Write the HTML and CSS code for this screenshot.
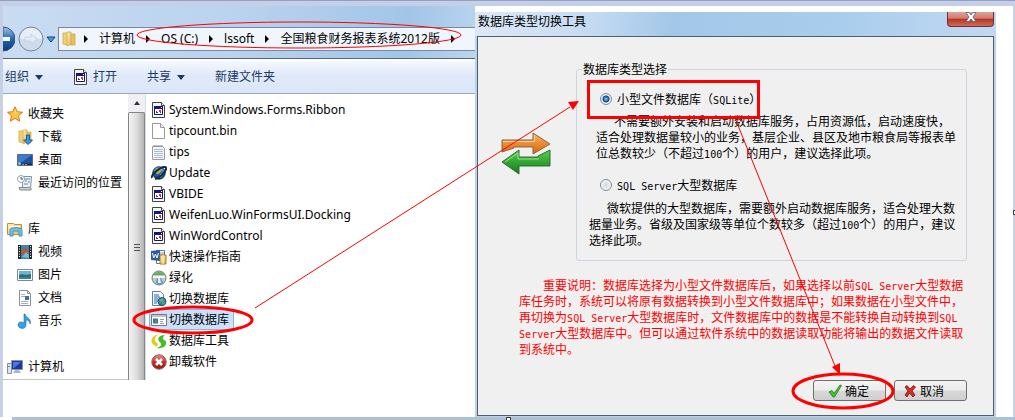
FILE: index.html
```html
<!DOCTYPE html>
<html lang="zh-CN">
<head>
<meta charset="utf-8">
<title>数据库类型切换工具</title>
<link rel="stylesheet" href="styles.css">
</head>
<body>
<svg class="defs" aria-hidden="true">
  <linearGradient id="gBlue" x2="0" y2="1"><stop stop-color="#9cc6ea"/><stop offset=".5" stop-color="#2467ae"/><stop offset="1" stop-color="#0a3a80"/></linearGradient>
  <linearGradient id="gFolder" x2="1" y2="1"><stop stop-color="#fdf3bf"/><stop offset="1" stop-color="#e5b84e"/></linearGradient>
  <linearGradient id="gOrange" x2="0" y2="1"><stop stop-color="#ffb45c"/><stop offset="1" stop-color="#d4660c"/></linearGradient>
  <linearGradient id="gGreen" x2="0" y2="1"><stop stop-color="#56d04a"/><stop offset="1" stop-color="#127a1c"/></linearGradient>
  <linearGradient id="gRed" x2="0" y2="1"><stop stop-color="#f0908a"/><stop offset=".5" stop-color="#cc2a24"/><stop offset="1" stop-color="#a01410"/></linearGradient>
  <symbol id="dll" viewBox="0 0 16 16"><path d="M1.500 .5h9l3 3v12h-12z" fill="#f6f6f0" stroke="#444"/><path d="M10.500 .5v3h3" fill="#fff" stroke="#444"/><path d="M3 5h9v8H3z" fill="#fff"/><path d="M3 4h9v3H3z" fill="#101890"/><path d="M3.500 4.500h8v8h-8z" fill="none" stroke="#14185c"/><path d="M10 5h1v1h-1z" fill="#fff"/><path d="M5 9h1v1H5z" fill="#d02020"/><path d="M8 8h2v2H8z" fill="#e03020"/><path d="M5 10h2v1H5zM9 10h1v1H9z" fill="#2040c0"/></symbol>
  <symbol id="page" viewBox="0 0 16 16"><path d="M1.500 .5h8l4 4v11h-12z" fill="#fefefa" stroke="#999"/><path d="M9.500 .5v4h4" fill="#eee" stroke="#999"/></symbol>
  <symbol id="note" viewBox="0 0 16 16"><path d="M1.500 2.500h10l2 2v11h-12z" fill="#f5f8fa" stroke="#99a"/><path d="M3 5.500h9M3 7.500h9M3 9.500h9M3 11.500h9M3 13.500h9" stroke="#abc" /><path d="M3 1v2M5 1v2M7 1v2M9 1v2M11 1v2" stroke="#888"/></symbol>
  <symbol id="globe" viewBox="0 0 16 16"><circle cx="8" cy="8" r="6.200" fill="url(#gBlue)" stroke="#0c2345"/><path d="M4 5l4-2 2 2-1 3-3 1zM9 9l3-1-1 4-2 1z" fill="#82b456"/><path d="M1 13C-.5 10 10 1 14 2s-3 10-10 12" fill="none" stroke="#172a3d" stroke-width="2"/><path d="M6 9l4-4" stroke="#d9a53c" stroke-width="1.500"/></symbol>
  <symbol id="word" viewBox="0 0 16 16"><path d="M5.500 1.500h8v13h-8z" fill="#fff" stroke="#678"/><path d="M7 4h6M7 6h6M7 8h6" stroke="#7895c0"/><path d="M0 2l9-1v11l-9-1z" fill="#285aa8"/><path d="M1.500 4l1.200 5L4.500 5l1.500 4L7.500 4" fill="none" stroke="#fff"/><path d="M9 6h6v9H9z" fill="url(#gFolder)" stroke="#a9741a"/><path d="M12 6v9" stroke="#fff" stroke-dasharray="1 1"/></symbol>
  <symbol id="green" viewBox="0 0 16 16"><circle cx="8" cy="8" r="7" fill="#b7cbc7" stroke="#71837f"/><path d="M2 5c2-4 10-4 12 0z" fill="#69a95a"/><path d="M2 6h12v2H2z" fill="#f4f4f4"/><path d="M6 8h4l2 5-4 2-3-2z" fill="#5f98c5"/><path d="M7 8h2l1 5H7z" fill="#eef"/></symbol>
  <symbol id="dbdoc" viewBox="0 0 16 16"><path d="M1.500 .5h8l3 3v11h-11z" fill="#f6faff" stroke="#5b7daa"/><path d="M3 4h5M3 6h6M3 8h4M3 10h4M3 12h3" stroke="#2f62ac"/><circle cx="11" cy="10.500" r="4" fill="#3e7fc0" stroke="#254d78"/><path d="M8 9l4-2 1 3-3 1zM11 12l3-1-1 3z" fill="#64b847"/></symbol>
  <symbol id="app" viewBox="0 0 16 16"><path d="M.5 2.500h15v11H.5z" fill="#fff" stroke="#777"/><path d="M1 3h14v2H1z" fill="#bcc5cf"/><path d="M2 6.500h5v5H2z" fill="#387795"/><path d="M3 9l3-2v4z" fill="#4f9a5b"/><path d="M9 7.500h4M9 9.500h3M9 11.500h4" stroke="#999"/></symbol>
  <symbol id="swirl" viewBox="0 0 16 16"><path d="M8 1C3 2-1 6 1 10c1 2 3 2 4 4l2-2c0-3-4-3-3-6 0-2 2-4 4-5z" fill="#e9cb17"/><path d="M14 2C9 2 6 5 8 8c1 2 3 2 2 4 0 1-2 2-4 3 5 1 10-2 9-6-1-3-4-2-3-4 0-1 1-2 2-3z" fill="#45bc25"/></symbol>
  <symbol id="remove" viewBox="0 0 16 16"><circle cx="8" cy="8" r="7.200" fill="url(#gRed)" stroke="#78605e"/><path d="M5 5l6 6M11 5l-6 6" stroke="#fff" stroke-width="2.600"/></symbol>
  <symbol id="star" viewBox="0 0 16 16"><path d="M8 .8l2.200 4.900 5.300.6-4 3.500 1.200 5.300L8 12.400l-4.700 2.700 1.200-5.300-4-3.500 5.300-.6z" fill="#ffc547" stroke="#d8731c"/><path d="M8 3l1.400 3.800L13 7H8z" fill="#ffe79a"/></symbol>
  <symbol id="folder" viewBox="0 0 16 16"><path d="M2 2h5v12l-5-1z" fill="#f0d272" stroke="#cda94c" stroke-width=".8"/><path d="M9 3h5v11H9z" fill="#e6c05a" stroke="#cda94c" stroke-width=".8"/><path d="M6 1h4v12l-4 2z" fill="url(#gFolder)" stroke="#cda94c" stroke-width=".8"/></symbol>
  <symbol id="download" viewBox="0 0 16 16"><use href="#folder"/><path d="M9.500 6h3v5h3L11 15.500 6.500 11h3z" fill="#3b9be0" stroke="#175a9c"/></symbol>
  <symbol id="desktop" viewBox="0 0 16 16"><path d="M.5 2.500h15v11H.5z" fill="#1c52a4" stroke="#667"/><path d="M1 3h14L5 10H1z" fill="#3c7ccc"/><path d="M1 11.500h14V13H1z" fill="#1b2a50"/><circle cx="2.500" cy="11.500" r="1.500" fill="#6ed5ec"/><path d="M5 12.500h2M8 12.500h2" stroke="#e8843c"/></symbol>
  <symbol id="recent" viewBox="0 0 16 16"><path d="M5.500 1.500h9l-1 12h-8z" fill="#eef2f6" stroke="#8292a1"/><circle cx="4" cy="4" r="3.500" fill="#fff" stroke="#8da0b0"/><path d="M4 2v2h2" fill="none" stroke="#345"/><path d="M8 4h5M8 6h2M11 7h2M7 9h4" stroke="#488bc8"/><path d="M2 12.500h9c1-1 4 0 3 2.500H3z" fill="#cbd1d6" stroke="#7e8992"/></symbol>
  <symbol id="library" viewBox="0 0 16 16"><path d="M.5 2.500h6l1 1h7v10H.5z" fill="url(#gFolder)" stroke="#b99137"/><path d="M2 5.500h11" stroke="#fff"/><path d="M3 15V9c0-3 12-3 12 0v6h-3v-5H6v5z" fill="#77c4e8" stroke="#3d8fbb"/></symbol>
  <symbol id="video" viewBox="0 0 16 16"><path d="M1 1h14v14H1z" fill="#222c30"/><path d="M4 1h8v14H4z" fill="#3d87ad"/><path d="M4 7l4-4 4 5v3H4z" fill="#a65e3e"/><path d="M5 13l4-5 3 3v3z" fill="#6abbe0"/><path d="M2.500 2v12M13.500 2v12" stroke="#eee" stroke-dasharray="1 1.500"/></symbol>
  <symbol id="picture" viewBox="0 0 16 16"><path d="M.5 2.500h15v11H.5z" fill="#fff" stroke="#7b8791"/><path d="M2 4h12v8H2z" fill="#66b5e8"/><path d="M2 8c4-2 5 1 12-1v3H2z" fill="#356f50"/><path d="M2 10h12v2H2z" fill="#2d80bb"/></symbol>
  <symbol id="document" viewBox="0 0 16 16"><path d="M2.500 .5h8l3 3v12h-11z" fill="#fff" stroke="#8793a0"/><path d="M10.500 .5v3h3" fill="none" stroke="#8793a0"/><path d="M4 4.500h4M4 6.500h4M4 11.500h7M4 13.500h7" stroke="#a4afba"/><path d="M8 6h4v4H8z" fill="#426dba"/></symbol>
  <symbol id="music" viewBox="0 0 16 16"><path d="M8 1c1 4 7 4 5 10 0-3-2-4-4-4v5c0 5-8 4-8 0 0-3 3-4 6-2V1z" fill="#36a0e0" stroke="#1768a8" stroke-width=".6"/></symbol>
  <symbol id="computer" viewBox="0 0 16 16"><path d="M.5 4.500h4v10h-4z" fill="#dce3e8" stroke="#84909a"/><path d="M1 7.500h2" stroke="#4a7"/><path d="M4.500 1.500h11v9h-11z" fill="#1838a8" stroke="#8996a4"/><path d="M6 3h8l-7 6H6z" fill="#4a78d8"/><path d="M8 11h4l2 3H6z" fill="#aeb8c2"/></symbol>
  <symbol id="tri" viewBox="0 0 8 8"><path d="M2 0l4 4-4 4z" fill="#000"/></symbol>
  <symbol id="down" viewBox="0 0 8 5"><path d="M0 0h8L4 5z" fill="#1c3a66"/></symbol>
</svg>

<div class="screen">
  <div class="stage">
    <section class="explorer">
      <header class="nav">
        <button class="back" aria-label="后退"><svg viewBox="0 0 12 26"><path d="M0 1a12 12 0 010 24z" fill="url(#gBlue)" stroke="#3a5170"/><path d="M0 11h7v4H0z" fill="#fff"/></svg></button>
        <button class="forward" aria-label="前进"><svg viewBox="0 0 26 26"><circle cx="13" cy="13" r="12" fill="#cfdbeb" stroke="#76859c"/><path d="M2 13a11 11 0 0122 0z" fill="#e6eef8"/><path d="M7 11h6V8l6 5-6 5v-3H7z" fill="#e3ebf5" stroke="#c6d2e4"/></svg></button>
        <button class="recent" aria-label="最近浏览"><svg viewBox="0 0 10 7"><path d="M1 1h8L5 6z" fill="#3e9bdc" stroke="#183f78"/></svg></button>
        <nav class="address">
          <svg class="icon"><use href="#folder"/></svg>
          <svg class="sep"><use href="#tri"/></svg><a href="#">计算机</a>
          <svg class="sep"><use href="#tri"/></svg><a href="#">OS (C:)</a>
          <svg class="sep"><use href="#tri"/></svg><a href="#">lssoft</a>
          <svg class="sep"><use href="#tri"/></svg><a href="#">全国粮食财务报表系统2012版</a>
          <svg class="sep"><use href="#tri"/></svg>
        </nav>
      </header>
      <div class="toolbar">
        <button>组织<svg class="caret"><use href="#down"/></svg></button>
        <button><svg class="icon"><use href="#dll"/></svg>打开</button>
        <button>共享<svg class="caret"><use href="#down"/></svg></button>
        <button>新建文件夹</button>
      </div>
      <div class="content">
        <nav class="tree">
          <a class="root" href="#"><svg class="icon"><use href="#star"/></svg>收藏夹</a>
          <a href="#"><svg class="icon"><use href="#download"/></svg>下载</a>
          <a href="#"><svg class="icon"><use href="#desktop"/></svg>桌面</a>
          <a href="#"><svg class="icon"><use href="#recent"/></svg>最近访问的位置</a>
          <a class="root" href="#"><svg class="icon"><use href="#library"/></svg>库</a>
          <a href="#"><svg class="icon"><use href="#video"/></svg>视频</a>
          <a href="#"><svg class="icon"><use href="#picture"/></svg>图片</a>
          <a href="#"><svg class="icon"><use href="#document"/></svg>文档</a>
          <a href="#"><svg class="icon"><use href="#music"/></svg>音乐</a>
          <a class="root" href="#"><svg class="icon"><use href="#computer"/></svg>计算机</a>
        </nav>
        <div class="scroll">
          <svg class="up" viewBox="0 0 6 4"><path d="M0 4l3-4 3 4z" fill="#333"/></svg>
          <div class="thumb"><svg viewBox="0 0 6 8"><path d="M0 1.500h6M0 4.500h6M0 7.500h6" stroke="#555"/></svg></div>
        </div>
        <ul class="files">
          <li><svg class="icon"><use href="#dll"/></svg>System.Windows.Forms.Ribbon</li>
          <li><svg class="icon"><use href="#page"/></svg>tipcount.bin</li>
          <li><svg class="icon"><use href="#note"/></svg>tips</li>
          <li><svg class="icon"><use href="#globe"/></svg>Update</li>
          <li><svg class="icon"><use href="#dll"/></svg>VBIDE</li>
          <li><svg class="icon"><use href="#dll"/></svg>WeifenLuo.WinFormsUI.Docking</li>
          <li><svg class="icon"><use href="#dll"/></svg>WinWordControl</li>
          <li><svg class="icon"><use href="#word"/></svg>快速操作指南</li>
          <li><svg class="icon"><use href="#green"/></svg>绿化</li>
          <li><svg class="icon"><use href="#dbdoc"/></svg>切换数据库</li>
          <li class="selected"><svg class="icon"><use href="#app"/></svg>切换数据库</li>
          <li><svg class="icon"><use href="#swirl"/></svg>数据库工具</li>
          <li><svg class="icon"><use href="#remove"/></svg>卸载软件</li>
        </ul>
      </div>
    </section>

    <section class="dialog">
      <header class="titlebar">
        <h1>数据库类型切换工具</h1>
        <button class="close" aria-label="关闭"><svg viewBox="0 0 12 10"><path d="M1 .5h3l2 2.500 2-2.500h3L8 5l3 4.500H8L6 7 4 9.500H1L4 5z" fill="#fff" stroke="#555c70" stroke-width=".8"/></svg></button>
      </header>
      <form class="body">
        <div class="choice">
          <svg class="swap" viewBox="0 0 50 44"><path d="M1 20V8h31V1l17 11-17 10v-7H13v1z" fill="url(#gOrange)" stroke="#8d6547"/><path d="M49 18v16H18v8L1 30l17-12v7h19v-1z" fill="url(#gGreen)" stroke="#316d37"/><path d="M2 9.500h31.500V3" fill="none" stroke="#ffd09a"/><path d="M4 30l13-9v6h21" fill="none" stroke="#94e58a"/></svg>
          <fieldset>
            <legend>数据库类型选择</legend>
            <label><input type="radio" name="db" checked><span>小型文件数据库（<span class="mono">SQLite</span>）</span></label>
            <p class="small-db">不需要额外安装和启动数据库服务，占用资源低，启动速度快，<br>适合处理数据量较小的业务，基层企业、县区及地市粮食局等报表单<br>位总数较少（不超过<span class="mono">100</span>个）的用户，建议选择此项。</p>
            <label><input type="radio" name="db"><span><span class="mono">SQL Server</span>大型数据库</span></label>
            <p class="large-db">微软提供的大型数据库，需要额外启动数据库服务，适合处理大数<br>据量业务。省级及国家级等单位个数较多（超过<span class="mono">100</span>个）的用户，建议<br>选择此项。</p>
          </fieldset>
        </div>
        <p class="notice">重要说明：数据库选择为小型文件数据库后，如果选择以前<span class="mono">SQL Server</span>大型数据<br>库任务时，系统可以将原有数据转换到小型文件数据库中；如果数据在小型文件中，<br>再切换为<span class="mono">SQL Server</span>大型数据库时，文件数据库中的数据是不能转换自动转换到<span class="mono">SQL</span><br><span class="mono">Server</span>大型数据库中。但可以通过软件系统中的数据读取功能将输出的数据文件读取<br>到系统中。</p>
        <div class="actions">
          <button class="ok" type="button"><svg viewBox="0 0 14 14"><path d="M1 8l3-1.500 2 3L12 1l1.500.5L6.500 13H5z" fill="#43c233" stroke="#257c20" stroke-width=".8"/></svg>确定</button>
          <button class="cancel" type="button"><svg viewBox="0 0 14 14"><path d="M2 3l2-1.500 3 3.500 3.500-3.500L12.500 3 9 7l3 4-2 2-3.500-4L4 13l-2-2 3-4z" fill="#d92c25" stroke="#6e1512" stroke-width=".8"/></svg>取消</button>
        </div>
      </form>
    </section>
  </div>
  <div class="bottom-edge"></div>

  <svg class="marks" viewBox="0 0 1015 420" aria-hidden="true">
    <g fill="none" stroke="#f00">
      <ellipse cx="299" cy="35" rx="162" ry="13"/>
      <path d="M255 308L570 107M735 118L835 366"/>
      <g stroke-width="3">
        <path d="M588.500 81.500h170v36h-170z"/>
        <ellipse cx="193" cy="320" rx="59" ry="13"/>
        <ellipse cx="843" cy="391" rx="50" ry="17"/>
      </g>
    </g>
    <path d="M579 101l-6 9-5-8zM840 375l-8-8 8-4z" fill="#f00"/>
    <path d="M506.500 417.500h4v4h-4zM1013.500 210.500h4v4h-4z" fill="#fff" stroke="#333"/>
  </svg>
</div>
</body>
</html>
```
FILE: styles.css
```css
* { box-sizing: border-box; }

body {
  margin: 0;
  background: #fff;
  font: 12px/16px "Noto Sans", "Noto Sans CJK SC", sans-serif;
  color: #000;
  text-spacing-trim: space-all;
}

button {
  font: inherit;
  color: inherit;
  padding: 0;
  border: 0;
  background: none;
}

a { color: inherit; text-decoration: none; }
p, h1, ul { margin: 0; padding: 0; font-size: 12px; font-weight: normal; }

.defs { position: absolute; width: 0; height: 0; }
.icon { width: 16px; height: 16px; flex: none; }

.screen {
  position: relative;
  min-height: 100vh;
  display: flex;
  flex-direction: column;
  border-top: 1px solid #929fc8;
}

.stage {
  flex: 1;
  display: flex;
  align-items: flex-start;
  border: solid #c5d0e6;
  border-width: 5px 2px 0 3px;
}

.bottom-edge { height: 3px; background: #b0c0d2; margin-left: 12px; }
.marks { position: absolute; left: 0; top: -1px; width: 100%; pointer-events: none; }

/* Explorer */
.explorer { flex: 474 1 0; min-width: 0; }

.nav {
  display: flex;
  align-items: center;
  height: 53px;
  padding-top: 14px;
  background: linear-gradient(100deg, #c9dcf2, #b9d2ee 50%, #a2c5e7 85%, #b9d5ef);
  border-bottom: 1px solid #58667c;
}

.nav button svg { display: block; width: 100%; }
.back { width: 12px; }
.forward { width: 26px; margin-left: 3px; }
.recent { width: 10px; margin: 0 2px; }

.address {
  flex: 1;
  display: flex;
  align-items: center;
  height: 24px;
  padding-left: 2px;
  background: #f1f6fc;
  border: 1px solid #7988a0;
  border-right: 0;
  white-space: nowrap;
}

.address .icon { margin-right: -4px; }
.sep { width: 8px; height: 8px; flex: none; margin: 0 9px; }

.toolbar {
  display: flex;
  align-items: center;
  height: 35px;
  padding-left: 2px;
  color: #1c3a66;
  background: linear-gradient(#f5f8fd, #e0eafa 45%, #dae6f7);
  border-top: 2px solid #fff;
  border-bottom: 1px solid #98a6c0;
}

.toolbar button { display: flex; align-items: center; gap: 4px; margin-right: 30px; white-space: nowrap; }
.caret { width: 8px; height: 5px; margin-left: 2px; }

.content { display: flex; height: 286px; }

.tree { flex: 0 0 125px; padding-top: 8px; border-bottom: 1px solid #c0c8c0; }
.tree a { display: flex; align-items: center; gap: 5px; height: 23px; padding-left: 14px; white-space: nowrap; }
.tree .root { padding-left: 4px; }
.tree a + .root { margin-top: 23px; }

.scroll {
  flex: 0 0 17px;
  display: flex;
  flex-direction: column;
  align-items: center;
  background: #f0f0f2;
}

.up { width: 6px; height: 4px; margin: 7px 0; }

.thumb {
  flex: 1;
  width: 100%;
  display: flex;
  align-items: center;
  justify-content: center;
  border: 1px solid #858585;
  border-bottom: 0;
  border-radius: 2px 2px 0 0;
  background: linear-gradient(90deg, #f4f4f4, #dedede 50%, #b4b4b8);
}

.thumb svg { width: 6px; height: 8px; }

.files { flex: 1; padding: 5px 0 0 3px; list-style: none; border-left: 1px solid #d5dfec; }
.files li {
  display: flex;
  align-items: center;
  gap: 2px;
  width: max-content;
  height: 21px;
  padding: 0 4px 0 1px;
  border: 1px solid transparent;
}
.files .selected { background: #cbe0fa; border-color: #8ab4e2; border-radius: 2px; }

/* Dialog */
.dialog {
  flex: 519 1 0;
  min-width: 0;
  align-self: stretch;
  display: flex;
  flex-direction: column;
  margin: 6px 17px 0 0;
  padding: 0 2px 1px;
  background: #b9d3ec;
  font-family: "Noto Sans CJK SC", sans-serif;
}

.titlebar {
  display: flex;
  justify-content: space-between;
  align-items: flex-start;
  height: 24px;
  margin: 0 -2px;
  padding: 0 2px 0 3px;
  background: linear-gradient(95deg, #dce9f7, #c5dbf2 22%, #a3c7e8 38%, #a9cdec 70%, #c2d8f2);
}

h1 { padding-top: 1px; }

.close {
  display: flex;
  align-items: center;
  justify-content: center;
  width: 47px;
  height: 15px;
  padding-bottom: 4px;
  border: 1px solid #6b3035;
  border-top: 0;
  border-radius: 0 0 4px 4px;
  background: linear-gradient(#dfa299, #d17b6e 45%, #b53322 50%, #cf6c58);
}

.close svg { width: 12px; height: 10px; }

.body {
  flex: 1;
  display: flex;
  flex-direction: column;
  padding: 24px 26px 14px 23px;
  border: 1px solid #505d6b;
  background: #f0f0f0;
}

.choice { display: flex; align-items: center; gap: 25px; }
.swap { flex: none; width: 50px; height: 44px; margin-top: -14px; }

fieldset {
  flex: 1;
  min-width: 0;
  margin: 0;
  padding: 14px 0 12px 12px;
  border: 1px solid #ccd6e2;
  border-radius: 3px;
  white-space: nowrap;
}

legend { margin-left: -7px; padding: 0 1px; }

label { display: flex; align-items: center; gap: 5px; height: 16px; padding-left: 11px; }

input {
  appearance: none;
  width: 12px;
  height: 12px;
  margin: 0;
  border: 1px solid #858a90;
  border-radius: 50%;
  background: radial-gradient(#d5d9dc, #fff);
}

input:checked { background: radial-gradient(circle, #49b8ec 0 1px, #123f78 3px, #eef2f5 4px); }

.mono { font-family: "DejaVu Sans Mono", monospace; font-size: 10px; line-height: 1; }

.small-db { margin: 6px 0 16px 7px; text-indent: 18px; }
.large-db { margin-top: 7px; text-indent: 18px; }

.notice { margin: 16px 0 0 18px; color: #f00; text-indent: 24px; white-space: nowrap; }

.actions { display: flex; justify-content: flex-end; gap: 8px; margin-top: auto; }

.actions button {
  display: flex;
  align-items: center;
  gap: 3px;
  width: 73px;
  height: 21px;
  border: 1px solid #707070;
  border-radius: 3px;
  background: linear-gradient(#f4f4f4, #ebebeb 48%, #d8d8d8 52%, #cfcfcf);
}

.actions .ok { padding-left: 14px; }
.actions .cancel { padding-left: 8px; }
.actions svg { width: 14px; height: 14px; }
```
